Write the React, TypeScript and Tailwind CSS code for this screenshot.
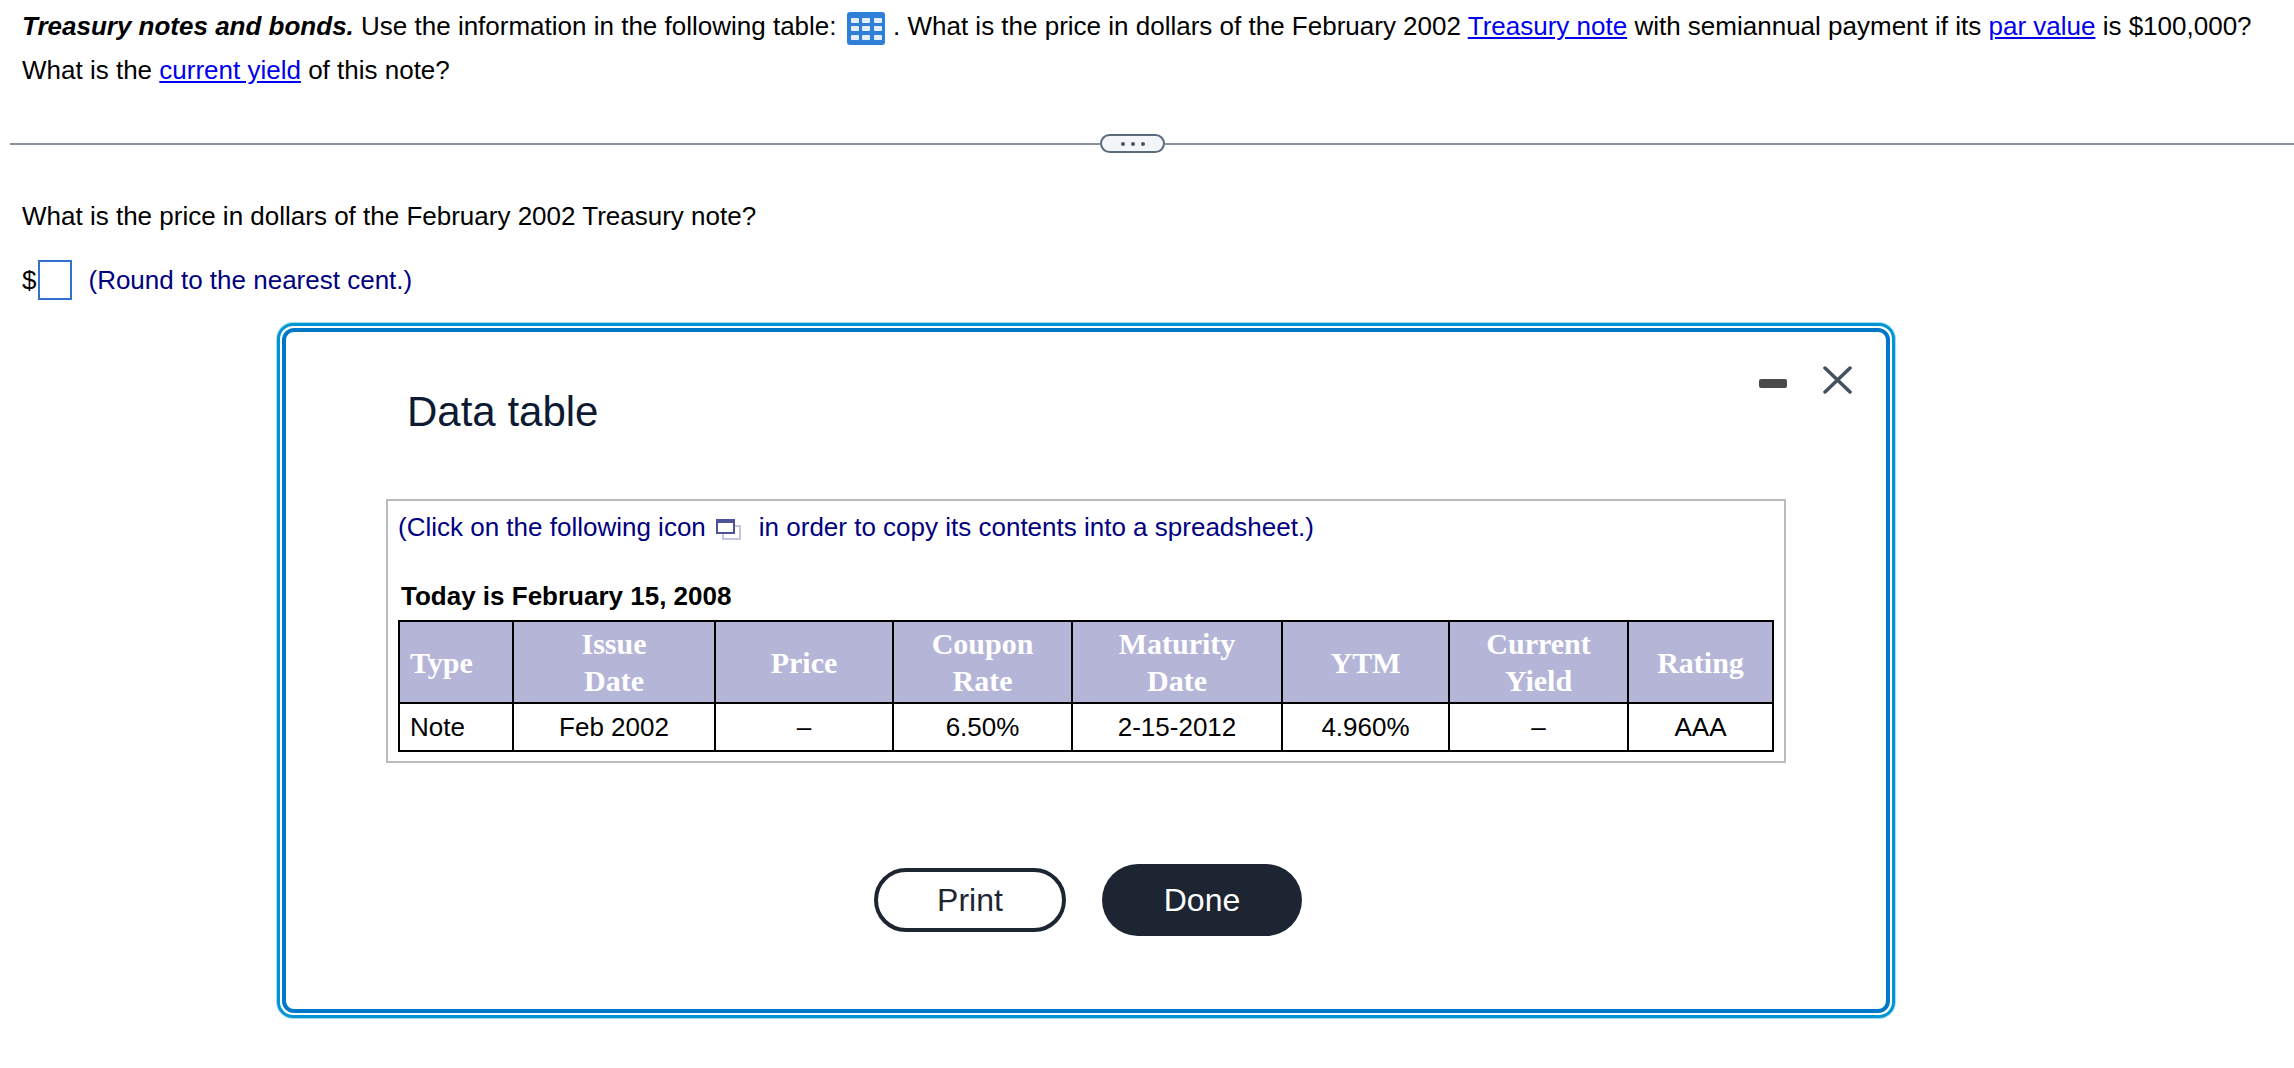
const sans = "font-['Liberation_Sans',Arial,sans-serif]";

function TableIcon() {
  return (
    <svg width="38" height="33" viewBox="0 0 38 33" className="ml-[3px] mr-[1px] inline-block align-middle">
      <rect width="38" height="33" rx="3" fill="#2f7fd9" />
      {[6, 14, 23].map((y) =>
        [4, 15, 27].map((x) => <rect key={`${x}-${y}`} x={x} y={y} width="8" height="5" rx="1" fill="#e4effb" />),
      )}
    </svg>
  );
}

function CopyIcon() {
  return (
    <svg width="26" height="22" viewBox="0 0 26 22" className="mt-[4px] shrink-0">
      <rect x="7" y="8" width="17" height="13" fill="#fff" stroke="#c3c6e2" strokeWidth="2" />
      <rect x="1" y="2" width="17" height="13" fill="#fff" stroke="#4d5299" strokeWidth="2" />
      <rect x="1" y="2" width="17" height="3" fill="#4d5299" />
    </svg>
  );
}

const headers = [
  { label: ["Type"], width: "w-[114px]", align: "text-left pl-[10px]" },
  { label: ["Issue", "Date"], width: "w-[202px]", align: "text-center" },
  { label: ["Price"], width: "w-[178px]", align: "text-center" },
  { label: ["Coupon", "Rate"], width: "w-[179px]", align: "text-center" },
  { label: ["Maturity", "Date"], width: "w-[210px]", align: "text-center" },
  { label: ["YTM"], width: "w-[167px]", align: "text-center" },
  { label: ["Current", "Yield"], width: "w-[179px]", align: "text-center" },
  { label: ["Rating"], width: "w-[145px]", align: "text-center" },
];

const row = ["Note", "Feb 2002", "–", "6.50%", "2-15-2012", "4.960%", "–", "AAA"];

export default function App() {
  return (
    <div className={`relative h-[1068px] w-[2294px] overflow-hidden bg-white text-[26px] text-black ${sans}`}>
      <div className="pl-[22px] pr-2 pt-[4px] leading-[44px]">
        <p className="whitespace-nowrap">
          <b className="italic">Treasury notes and bonds.</b> Use the information in the following table:{" "}
          <TableIcon /> . What is the price in dollars of the February 2002{" "}
          <a className="text-[#0000ee] underline">Treasury note</a> with semiannual payment if its{" "}
          <a className="text-[#0000ee] underline">par value</a> is $100,000?
        </p>
        <p>
          What is the <a className="text-[#0000ee] underline">current yield</a> of this note?
        </p>
      </div>

      <div className="mt-[42px] ml-[10px] flex items-center">
        <div className="h-[2px] w-[1090px] bg-[#87909e]" />
        <div className="flex h-[19px] w-[65px] items-center justify-center gap-[6px] rounded-full border-2 border-[#5a6b7e] bg-[#f3f5f8]">
          <span className="h-[4px] w-[4px] rounded-full bg-[#4b5563]" />
          <span className="h-[4px] w-[4px] rounded-full bg-[#4b5563]" />
          <span className="h-[4px] w-[4px] rounded-full bg-[#4b5563]" />
        </div>
        <div className="h-[2px] flex-1 bg-[#87909e]" />
      </div>

      <p className="mt-[41px] pl-[22px] leading-[44px]">What is the price in dollars of the February 2002 Treasury note?</p>
      <div className="mt-[22px] flex items-center pl-[22px]">
        <span>$</span>
        <div className="ml-[2px] h-[40px] w-[34px] border-2 border-[#3370d0]" />
        <span className="ml-[16px] text-[#000080]">(Round to the nearest cent.)</span>
      </div>

      <div className="absolute left-[277px] top-[323px] h-[695px] w-[1618px] rounded-[16px] border-[3px] border-[#0095d5] bg-white p-[2px] shadow-[0_0_0_1px_#a5def2]">
        <div className="relative h-full rounded-[12px] border-4 border-[#0077c8] pl-[100px]">
          <div className="absolute right-[34px] top-[34px] flex items-center gap-[36px]">
            <div className="mt-[6px] h-[9px] w-[28px] rounded-[2px] bg-[#4a4a4a]" />
            <svg width="29" height="28" viewBox="0 0 29 28" fill="none" stroke="#45505f" strokeWidth="3.5" strokeLinecap="round">
              <path d="M2 2 L27 26 M27 2 L2 26" />
            </svg>
          </div>

          <h2 className="pl-[21px] pt-[51px] text-[42px] leading-[58px] text-[#0d1a33]">Data table</h2>

          <div className="mt-[58px] h-[264px] w-[1400px] border-2 border-[#bbbbbb] pl-[10px]">
            <div className="mt-[1px] flex h-[50px] items-center text-[#000080]">
              <span>(Click on the following icon</span>
              <span className="ml-[10px]"><CopyIcon /></span>
              <span className="ml-[17px]">in order to copy its contents into a spreadsheet.)</span>
            </div>
            <p className="mt-[26px] pl-[3px] font-bold leading-[36px]">Today is February 15, 2008</p>
            <table className="mt-[6px] table-fixed border-collapse border-2 border-black">
              <thead>
                <tr className="h-[82px] bg-[#b5b5d8]">
                  {headers.map((h) => (
                    <th
                      key={h.label.join(" ")}
                      className={`${h.width} ${h.align} border-2 border-black font-['Liberation_Serif','Times_New_Roman',serif] text-[30px] font-bold leading-[37px] text-white`}
                    >
                      {h.label.map((line) => (
                        <div key={line}>{line}</div>
                      ))}
                    </th>
                  ))}
                </tr>
              </thead>
              <tbody>
                <tr className="h-[48px]">
                  {row.map((cell, i) => (
                    <td key={i} className={`border-2 border-black ${i === 0 ? "pl-[10px] text-left" : "text-center"}`}>
                      {cell}
                    </td>
                  ))}
                </tr>
              </tbody>
            </table>
          </div>

          <div className="mt-[101px] flex items-center pl-[488px]">
            <button className="h-[64px] w-[192px] rounded-full border-4 border-[#1e2532] text-[32px] text-[#1e2532]">Print</button>
            <button className="ml-[36px] h-[72px] w-[200px] rounded-full bg-[#1e2532] text-[32px] text-white">Done</button>
          </div>
        </div>
      </div>
    </div>
  );
}
